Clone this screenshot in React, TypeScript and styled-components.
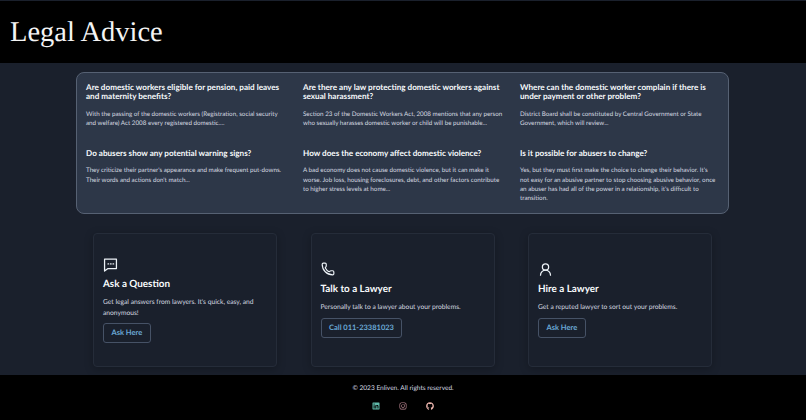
import { createGlobalStyle } from "styled-components";
import styled from "styled-components";
import { Phone, UserRound } from "lucide-react";
import { FaGithub, FaInstagram, FaLinkedin } from "react-icons/fa";

const GlobalStyle = createGlobalStyle`
  html, body {
    margin: 0;
    padding: 0;
    background: #000;
  }
  body {
    font-family: "Lato", "Noto Sans", sans-serif;
    color: #fff;
    text-rendering: geometricPrecision;
    -webkit-font-smoothing: antialiased;
  }
`;

const Page = styled.div`
  width: 806px;
  height: 420px;
  display: flex;
  flex-direction: column;
  overflow: hidden;
`;

const Header = styled.header`
  height: 63px;
  box-sizing: border-box;
  background: #000;
  border-top: 1px solid #1a202c;
  padding-left: 10px;
  display: flex;
  align-items: center;
`;

const Title = styled.h1`
  margin: 2px 0 0;
  font-family: "Liberation Serif", serif;
  font-size: 28.5px;
  font-weight: 400;
  color: #f4f4f4;
`;

const Main = styled.main`
  height: 312px;
  box-sizing: border-box;
  background: #1a202c;
  padding: 9px 0 0 76px;
  display: flex;
  flex-direction: column;
  align-items: flex-start;
`;

const FaqPanel = styled.section`
  width: 653px;
  height: 142px;
  box-sizing: border-box;
  padding: 10px 9px 0;
  background: #2d3748;
  border: 1px solid #566173;
  border-radius: 8px;
  display: grid;
  grid-template-columns: 200px 200px 197px;
  grid-template-rows: 66px 1fr;
  column-gap: 17px;
`;

const FaqTitle = styled.h3`
  margin: 0 0 8px;
  font-size: 8.15px;
  line-height: 9.4px;
  font-weight: 700;
  color: #f7fafc;
`;

const FaqText = styled.p`
  margin: 0;
  font-size: 6.25px;
  line-height: 9.3px;
  color: #d6dae0;
`;

const Cards = styled.section`
  width: 619px;
  margin: 19px 0 0 17px;
  display: grid;
  grid-template-columns: repeat(3, 184px);
  justify-content: space-between;
`;

const Card = styled.article`
  height: 134px;
  box-sizing: border-box;
  padding: 0 9px;
  background: #1a202c;
  border: 1px solid #252c39;
  border-radius: 4px;
  box-shadow: 0 2px 8px rgba(0, 0, 0, 0.25);
  display: flex;
  flex-direction: column;
  justify-content: center;
  align-items: flex-start;
`;

const IconSlot = styled.div`
  height: 15px;
  color: #edf2f7;
  margin-bottom: 5px;
  svg {
    display: block;
  }
`;

const CardTitle = styled.h2`
  margin: 0 0 6px;
  font-size: 9.9px;
  line-height: 14px;
  font-weight: 700;
  color: #f7fafc;
`;

const CardText = styled.p`
  margin: 0 0 5px;
  font-size: 6.7px;
  line-height: 10.4px;
  color: #d6dae0;
`;

const CardButton = styled.a`
  display: inline-block;
  height: 20px;
  box-sizing: border-box;
  padding: 0 7.5px;
  border: 1px solid #465266;
  border-radius: 3px;
  font-size: 7.5px;
  font-weight: 700;
  line-height: 18px;
  color: #6aa9d6;
`;

const Footer = styled.footer`
  flex: 1;
  background: #000;
  display: flex;
  flex-direction: column;
  align-items: center;
  padding-top: 9px;
`;

const Copy = styled.p`
  margin: 0 0 8px;
  font-size: 6.55px;
  line-height: 10px;
  color: #d6dae0;
`;

const Socials = styled.div`
  display: flex;
  gap: 19px;
`;

const Social = styled.a<{ $tint: string }>`
  display: block;
  color: ${(p) => p.$tint};
  svg {
    display: block;
  }
`;

function ChatIcon() {
  return (
    <svg width="15" height="15" viewBox="0 0 24 24" fill="none" stroke="currentColor" strokeWidth="2">
      <path d="M2.5 3.5h19v15H8l-5.5 4z" strokeLinejoin="round" />
      <path d="M8 11h1M12 11h1M16 11h1" strokeLinecap="round" />
    </svg>
  );
}

const faqs = [
  {
    q: "Are domestic workers eligible for pension, paid leaves and maternity benefits?",
    a: "With the passing of the domestic workers (Registration, social security and welfare) Act 2008 every registered domestic....",
  },
  {
    q: "Are there any law protecting domestic workers against sexual harassment?",
    a: "Section 23 of the Domestic Workers Act, 2008 mentions that any person who sexually harasses domestic worker or child will be punishable...",
  },
  {
    q: "Where can the domestic worker complain if there is under payment or other problem?",
    a: "District Board shall be constituted by Central Government or State Government, which will review...",
  },
  {
    q: "Do abusers show any potential warning signs?",
    a: "They criticize their partner's appearance and make frequent put-downs. Their words and actions don't match...",
  },
  {
    q: "How does the economy affect domestic violence?",
    a: "A bad economy does not cause domestic violence, but it can make it worse. Job loss, housing foreclosures, debt, and other factors contribute to higher stress levels at home...",
  },
  {
    q: "Is it possible for abusers to change?",
    a: "Yes, but they must first make the choice to change their behavior. It's not easy for an abusive partner to stop choosing abusive behavior, once an abuser has had all of the power in a relationship, it's difficult to transition.",
  },
];

const actions = [
  {
    icon: <ChatIcon />,
    title: "Ask a Question",
    text: "Get legal answers from lawyers. It's quick, easy, and anonymous!",
    button: "Ask Here",
  },
  {
    icon: <Phone size={14} strokeWidth={2} />,
    title: "Talk to a Lawyer",
    text: "Personally talk to a lawyer about your problems.",
    button: "Call 011-23381023",
  },
  {
    icon: <UserRound size={15} strokeWidth={2} />,
    title: "Hire a Lawyer",
    text: "Get a reputed lawyer to sort out your problems.",
    button: "Ask Here",
  },
];

export default function App() {
  return (
    <Page>
      <GlobalStyle />
      <Header>
        <Title>Legal Advice</Title>
      </Header>
      <Main>
        <FaqPanel>
          {faqs.map((f) => (
            <div key={f.q}>
              <FaqTitle>{f.q}</FaqTitle>
              <FaqText>{f.a}</FaqText>
            </div>
          ))}
        </FaqPanel>
        <Cards>
          {actions.map((a) => (
            <Card key={a.title}>
              <IconSlot>{a.icon}</IconSlot>
              <CardTitle>{a.title}</CardTitle>
              <CardText>{a.text}</CardText>
              <CardButton>{a.button}</CardButton>
            </Card>
          ))}
        </Cards>
      </Main>
      <Footer>
        <Copy>© 2023 Enliven. All rights reserved.</Copy>
        <Socials>
          <Social $tint="#5fb8a8"><FaLinkedin size={8} /></Social>
          <Social $tint="#c08a96"><FaInstagram size={8} /></Social>
          <Social $tint="#f0b8b0"><FaGithub size={8} /></Social>
        </Socials>
      </Footer>
    </Page>
  );
}
